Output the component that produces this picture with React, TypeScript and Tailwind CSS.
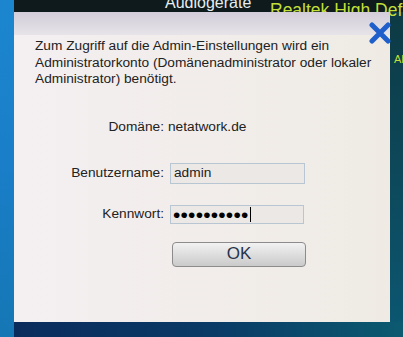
import React from "react";

const font = { fontFamily: '"Liberation Sans", Arial, sans-serif' };

function CloseIcon() {
  return (
    <svg width="24" height="22" viewBox="0 0 24 22" className="block">
      <path d="M4 3 L20 19 M20 3 L4 19" stroke="#1f5fcb" strokeWidth="5" strokeLinecap="round" fill="none" />
    </svg>
  );
}

function Row({ label, children, className, gap = "ml-[5px]" }: { label: string; children: React.ReactNode; className?: string; gap?: string }) {
  return (
    <div className={`flex items-center ${className ?? ""}`}>
      <div className="w-[130px] shrink-0 pr-[1px] text-right">{label}</div>
      <div className={`${gap} flex items-center`}>{children}</div>
    </div>
  );
}

export default function App() {
  return (
    <div className="relative flex h-[337px] w-[403px] overflow-hidden bg-[#0b3550]" style={font}>
      {/* left desktop strip */}
      <div className="w-[14px] shrink-0 bg-gradient-to-b from-[#1b86cf] via-[#1a7ec8] to-[#1577b4]" />

      <div className="flex flex-1 flex-col">
        {/* top of the window behind */}
        <div className="h-[12px] shrink-0 bg-[#0e1a1c]" />

        <div className="flex flex-1">
          {/* dialog */}
          <div className="relative z-10 flex w-[376px] flex-col bg-gradient-to-r from-[#f4eff1] to-[#efebe4] text-[13.7px] leading-[16.5px] text-[#222]">
            <div className="h-[23px] bg-gradient-to-b from-[#d2cdd9] via-[#dcd8e0] to-[#e7e4e9]" />
            <div className="absolute right-[-2px] top-[10px]">
              <CloseIcon />
            </div>

            <div className="pl-[21px] pr-[10px] pt-[3px]">
              <p>
                Zum Zugriff auf die Admin-Einstellungen wird ein
                <br />
                Administratorkonto (Domänenadministrator oder lokaler
                <br />
                Administrator) benötigt.
              </p>

              <Row label="Domäne:" className="mt-[29px] h-[21px]" gap="ml-[3px]">
                <span>netatwork.de</span>
              </Row>

              <Row label="Benutzername:" className="mt-[25px]">
                <div className="flex h-[21px] w-[135px] items-center border border-[#b7c6d2] bg-[#ebe8e6] pl-[3px]">
                  admin
                </div>
              </Row>

              <Row label="Kennwort:" className="mt-[21px]">
                <div className="flex h-[19px] w-[134px] items-center border border-[#b7c6d2] bg-[#ebe8e6] pl-[2px]">
                  <span className="text-[21px] leading-[19px] tracking-[0.2px] text-black">••••••••••</span>
                  <span className="ml-[1px] h-[15px] w-[1px] bg-black" />
                </div>
              </Row>

              <div className="ml-[137px] mt-[18px]">
                <button className="flex h-[25px] w-[134px] items-center justify-center rounded-[4px] border border-[#8c8c8c] bg-gradient-to-b from-[#f2f2f2] to-[#cacaca] text-[17px] text-[#26324c]">
                  OK
                </button>
              </div>
            </div>
          </div>

          {/* right desktop strip */}
          <div className="flex-1 bg-gradient-to-b from-[#0d3a44] to-[#0b5670]" />
        </div>

        {/* bottom desktop strip */}
        <div className="h-[15px] shrink-0 bg-gradient-to-r from-[#0a2c5c] via-[#0a3a66] to-[#0c5a70]" />
      </div>

      {/* window text behind the dialog */}
      <span className="absolute left-[165px] top-[-5px] text-[16px] leading-[16px] text-[#e6edf0]">Audiogeräte</span>
      <span className="absolute left-[270px] top-[2px] whitespace-nowrap text-[17.5px] leading-[17px] text-[#c3df3a]">
        Realtek High Definition
      </span>
      <span className="absolute left-[394px] top-[54px] text-[11px] leading-[11px] text-[#c3df3a]">AL</span>
    </div>
  );
}
